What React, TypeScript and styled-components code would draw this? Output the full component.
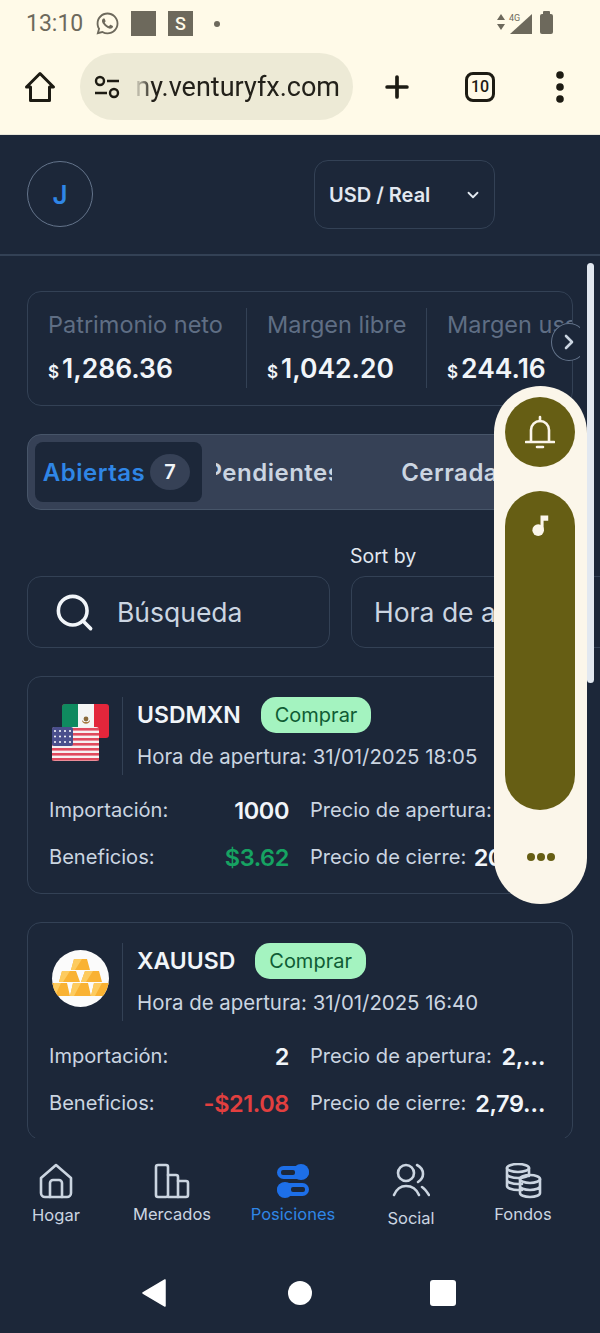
import styled, { createGlobalStyle } from 'styled-components';
import { FaWhatsapp } from 'react-icons/fa';
import { ChevronDown, ChevronRight, Search, Plus } from 'lucide-react';

const GlobalStyle = createGlobalStyle`
  * { box-sizing: border-box; }
  html, body { margin: 0; padding: 0; background: #1c2739; }
  body { font-family: Inter, "Liberation Sans", sans-serif; }
`;

const Screen = styled.div`
  position: relative;
  width: 600px;
  height: 1333px;
  overflow: hidden;
  display: flex;
  flex-direction: column;
  background: #1c2739;
`;

const Chrome = styled.div`
  height: 135px;
  flex: none;
  background: #fffae8;
  border-bottom: 1px solid #e8e6da;
`;

const StatusBar = styled.div`
  height: 47px;
  display: flex;
  align-items: center;
  padding: 0 47px 0 26px;
  font-family: Roboto, sans-serif;
  font-size: 23px;
  color: #6d695c;
`;

const Time = styled.span`
  width: 69px;
`;

const StatusTile = styled.span<{ $gap: number }>`
  width: 25px;
  height: 25px;
  margin-left: ${(p) => p.$gap}px;
  background: #6d695c;
  color: #fffae8;
  font-size: 18px;
  font-weight: 500;
  display: flex;
  align-items: center;
  justify-content: center;
`;

const StatusDot = styled.span`
  width: 6px;
  height: 6px;
  margin-left: 21px;
  border-radius: 50%;
  background: #6d695c;
`;

const StatusRight = styled.div`
  margin-left: auto;
  display: flex;
  align-items: center;
`;

const ToolBar = styled.div`
  height: 73px;
  margin-top: 3px;
  display: grid;
  grid-template-columns: 80px 273px 88px 78px 82px;
  align-items: center;
`;

const ToolButton = styled.div`
  display: flex;
  justify-content: center;
  align-items: center;
  color: #1d1b13;
`;

const Omnibox = styled.div`
  height: 67px;
  border-radius: 34px;
  background: #edead6;
  display: flex;
  align-items: center;
  padding: 0 13px 0 14px;
  gap: 14px;
`;

const UrlWindow = styled.div`
  flex: 1;
  display: flex;
  justify-content: flex-end;
  overflow: hidden;
  font-family: Roboto, sans-serif;
  font-size: 27px;
  color: #23211a;
  white-space: nowrap;
  -webkit-mask-image: linear-gradient(90deg, transparent 0, #000 18px);
  mask-image: linear-gradient(90deg, transparent 0, #000 18px);
`;

const TabCount = styled.div`
  width: 30px;
  height: 30px;
  border: 3px solid #1d1b13;
  border-radius: 8px;
  display: flex;
  align-items: center;
  justify-content: center;
  font-family: Roboto, sans-serif;
  font-size: 16px;
  font-weight: 500;
  color: #1d1b13;
`;

const TopBar = styled.header`
  height: 121px;
  flex: none;
  padding: 25px 0 0 27px;
  display: flex;
  align-items: flex-start;
  border-bottom: 2px solid #334155;
`;

const Avatar = styled.div`
  width: 66px;
  height: 66px;
  margin-top: 1px;
  border-radius: 50%;
  border: 1px solid #64748b;
  display: flex;
  align-items: center;
  justify-content: center;
  color: #2f86e6;
  font-size: 26px;
  font-weight: 600;
`;

const AccountSelect = styled.div`
  width: 181px;
  height: 69px;
  margin-left: 221px;
  padding: 0 12px 0 14px;
  display: flex;
  align-items: center;
  justify-content: space-between;
  border: 1px solid #334155;
  border-radius: 14px;
  color: #e2e8f0;
  font-size: 20px;
  font-weight: 600;
`;

const Content = styled.main`
  flex: none;
  height: 882px;
  overflow: hidden;
  padding: 35px 27px 0;
  display: flex;
  flex-direction: column;
`;

const SummaryCard = styled.section`
  height: 115px;
  flex: none;
  border: 1px solid #334155;
  border-radius: 14px;
  padding: 16px 0 0 20px;
  display: flex;
  overflow: hidden;
`;

const SummaryItem = styled.div<{ $width: number }>`
  flex: none;
  width: ${(p) => p.$width}px;
  height: 80px;
  & + & {
    padding-left: 20px;
    border-left: 1px solid #334155;
  }
`;

const SummaryLabel = styled.div`
  font-size: 23.5px;
  line-height: 34px;
  color: #5f6e84;
  white-space: nowrap;
`;

const SummaryValue = styled.div`
  margin-top: 8px;
  font-size: 26.5px;
  line-height: 36px;
  font-weight: 600;
  color: #f1f5f9;
  white-space: nowrap;
`;

const Dollar = styled.span`
  font-size: 17px;
  margin-right: 3px;
`;

const NextButton = styled.div`
  position: absolute;
  top: 323px;
  left: 551px;
  width: 29px;
  height: 38px;
  overflow: hidden;
  color: #cbd5e1;
`;

const NextCircle = styled.div`
  width: 36px;
  height: 38px;
  border: 1px solid #64748b;
  border-radius: 50%;
  background: #1c2739;
  display: flex;
  align-items: center;
  justify-content: center;
`;

const Tabs = styled.div`
  height: 76px;
  flex: none;
  margin-top: 28px;
  padding: 7px;
  display: flex;
  background: #364156;
  border: 1px solid #475569;
  border-radius: 14px;
  overflow: hidden;
`;

const Tab = styled.div<{ $active?: boolean; $width: number; $offset?: number }>`
  flex: none;
  width: ${(p) => p.$width}px;
  height: 60px;
  margin-left: ${(p) => p.$offset ?? 0}px;
  padding-right: ${(p) => (p.$active ? 4 : 0)}px;
  display: flex;
  align-items: center;
  justify-content: center;
  gap: 5px;
  overflow: hidden;
  white-space: nowrap;
  border-radius: 8px;
  font-size: 24px;
  font-weight: 600;
  letter-spacing: 0.5px;
  color: ${(p) => (p.$active ? '#2f86e6' : '#cbd5e1')};
  background: ${(p) => (p.$active ? '#1c2739' : 'transparent')};
`;

const TabText = styled.span`
  flex: none;
`;

const TabBadge = styled.span`
  width: 40px;
  height: 36px;
  flex: none;
  border-radius: 50%;
  background: #364156;
  display: flex;
  align-items: center;
  justify-content: center;
  font-size: 20px;
  color: #f1f5f9;
`;

const SortLabel = styled.div`
  margin: 34px 0 8px 323px;
  font-size: 19.5px;
  line-height: 24px;
  color: #e2e8f0;
`;

const FilterRow = styled.div`
  display: grid;
  grid-template-columns: 303px 303px;
  gap: 21px;
  flex: none;
`;

const FilterBox = styled.div`
  height: 72px;
  border: 1px solid #334155;
  border-radius: 14px;
  padding: 0 25px;
  display: flex;
  align-items: center;
  gap: 21px;
  font-size: 26.5px;
  color: #cbd5e1;
  white-space: nowrap;
  overflow: hidden;
`;

const SortBox = styled(FilterBox)`
  padding-left: 22px;
`;

const PositionCard = styled.article`
  height: 218px;
  flex: none;
  margin-top: 28px;
  padding: 20px 21px 0;
  border: 1px solid #334155;
  border-radius: 14px;
`;

const CardHead = styled.div`
  display: flex;
  height: 78px;
`;

const CardIcon = styled.div`
  width: 74px;
  flex: none;
  padding-bottom: 8px;
  border-right: 1px solid #334155;
  display: flex;
  align-items: center;
`;

const CardInfo = styled.div`
  padding-left: 14px;
`;

const SymbolLine = styled.div`
  display: flex;
  align-items: center;
  gap: 20px;
  height: 36px;
`;

const Symbol = styled.span`
  font-size: 23px;
  font-weight: 600;
  color: #f1f5f9;
`;

const SidePill = styled.span`
  height: 36px;
  padding: 0 14px;
  border-radius: 15px;
  display: flex;
  align-items: center;
  background: #a4f3c0;
  color: #0f5c34;
  font-size: 20px;
`;

const OpenTime = styled.div`
  margin-top: 10px;
  font-size: 20.4px;
  line-height: 28px;
  white-space: nowrap;
  color: #cbd5e1;
`;

const Stats = styled.div`
  margin-top: 21px;
  display: grid;
  grid-template-columns: 240px 235px;
  column-gap: 21px;
  row-gap: 19px;
`;

const Stat = styled.div`
  display: flex;
  align-items: center;
  justify-content: space-between;
  height: 28px;
  white-space: nowrap;
`;

const StatLabel = styled.span`
  font-size: 20.1px;
  color: #cbd5e1;
`;

const StatValue = styled.span<{ $tone?: 'up' | 'down' }>`
  font-size: 23.5px;
  font-weight: 600;
  letter-spacing: -0.4px;
  color: ${(p) => (p.$tone === 'up' ? '#16a362' : p.$tone === 'down' ? '#e23f3f' : '#f1f5f9')};
`;

const BottomNav = styled.nav`
  flex: none;
  height: 195px;
  display: flex;
  flex-direction: column;
`;

const NavItems = styled.div`
  height: 127px;
  padding-top: 25px;
  display: grid;
  grid-template-columns: 112px 120px 122px 114px 110px;
`;

const NavItem = styled.div<{ $active?: boolean }>`
  display: flex;
  flex-direction: column;
  align-items: center;
  font-size: 16.5px;
  color: ${(p) => (p.$active ? '#2f86e6' : '#cbd5e1')};
`;

const NavLabel = styled.span<{ $drop: number }>`
  margin-top: ${(p) => p.$drop}px;
  line-height: 20px;
`;

const SystemNav = styled.div`
  flex: 1;
  display: grid;
  grid-template-columns: 142px 24px 122px 24px 118px 26px;
  align-items: center;
  padding-bottom: 13px;
`;

const Circle = styled.div`
  width: 24px;
  height: 24px;
  border-radius: 50%;
  background: #fff;
`;

const Square = styled.div`
  width: 26px;
  height: 26px;
  border-radius: 3px;
  background: #fff;
`;

const ScrollThumb = styled.div`
  position: absolute;
  top: 263px;
  left: 587px;
  width: 7px;
  height: 420px;
  border-radius: 4px;
  background: #e2e8f0;
`;

const AssistPanel = styled.aside`
  position: absolute;
  top: 386px;
  left: 494px;
  width: 93px;
  height: 518px;
  padding: 11px;
  border-radius: 47px;
  background: #fbf6ea;
  display: flex;
  flex-direction: column;
  align-items: flex-start;
`;

const BellButton = styled.div`
  width: 70px;
  height: 70px;
  flex: none;
  border-radius: 50%;
  background: #665e14;
  display: flex;
  align-items: center;
  justify-content: center;
`;

const MusicPill = styled.div`
  width: 70px;
  height: 319px;
  flex: none;
  margin-top: 24px;
  padding-top: 22px;
  border-radius: 35px;
  background: #665e14;
  display: flex;
  justify-content: center;
`;

const MoreDots = styled.div`
  margin-top: 43px;
  align-self: center;
  display: flex;
  gap: 2px;
`;

const MoreDot = styled.span`
  width: 8px;
  height: 8px;
  border-radius: 50%;
  background: #665e14;
`;

function FlagPair() {
  const stripes = [0, 2, 4, 6, 8, 10, 12];
  return (
    <svg width="60" height="60" viewBox="-1 0 60 60">
      <rect x="12" y="2" width="47" height="34" rx="3" fill="#e3263b" />
      <path d="M15 2h13v34H15a3 3 0 0 1-3-3V5a3 3 0 0 1 3-3z" fill="#0f8a5f" />
      <rect x="28" y="2" width="16" height="34" fill="#f4f5f4" />
      <path d="M32 18c0 5 8 5 8 0l-2 2h-4z" fill="#a8793f" />
      <circle cx="36" cy="17" r="2.4" fill="#8a6a3a" />
      <rect x="2" y="25" width="47" height="34" rx="3" fill="#f6f1f1" />
      {stripes.map((s) => (
        <rect key={s} x="2" y={26 + s * 2.5} width="47" height="2.6" fill="#e04a5d" />
      ))}
      <rect x="2" y="25" width="21" height="19" rx="2" fill="#4a4f8c" />
      {[0, 1, 2].map((r) =>
        [0, 1, 2, 3].map((c) => <circle key={`${r}${c}`} cx={5 + c * 5} cy={29 + r * 5.5} r="1" fill="#fff" />)
      )}
    </svg>
  );
}

function GoldCoin() {
  return (
    <svg width="60" height="57" viewBox="-3 0 60 57">
      <clipPath id="coin">
        <circle cx="28.5" cy="28.5" r="28.5" />
      </clipPath>
      <circle cx="28.5" cy="28.5" r="28.5" fill="#fbfbfb" />
      <g clipPath="url(#coin)">
        <path
          d="M22 9h13l3 11H19zM10 21h14l4 11H7zM33 21h14l3 11H29zM-1 33h16l3 13H-3zM21 33h15l3 13H18zM42 33h16l2 13H39z"
          fill="#f9b233"
        />
        <path d="M22 9h8l-7 11h-4zM10 21h8l-7 11H7zM33 21h8l-7 11h-5zM21 33h8l-7 13h-4zM42 33h8l-7 13h-4zM2 33h7l-6 13H-1z" fill="#fdcb5f" />
      </g>
    </svg>
  );
}

const positions = [
  {
    symbol: 'USDMXN',
    time: '31/01/2025 18:05',
    volume: '1000',
    profit: '$3.62',
    tone: 'up' as const,
    open: '2…',
    close: '20.8…',
    icon: <FlagPair />,
  },
  {
    symbol: 'XAUUSD',
    time: '31/01/2025 16:40',
    volume: '2',
    profit: '-$21.08',
    tone: 'down' as const,
    open: '2,…',
    close: '2,79…',
    icon: <GoldCoin />,
  },
];

const navStroke = { fill: 'none', stroke: '#cbd5e1', strokeWidth: 2.6, strokeLinecap: 'round', strokeLinejoin: 'round' } as const;

function App() {
  return (
    <Screen>
      <GlobalStyle />
      <Chrome>
        <StatusBar>
          <Time>13:10</Time>
          <FaWhatsapp size={25} />
          <StatusTile $gap={11} />
          <StatusTile $gap={12}>S</StatusTile>
          <StatusDot />
          <StatusRight>
            <svg width="56" height="26" viewBox="0 0 56 26" fill="#6d695c">
              <path d="M4 3l4 6H0zM4 19l4-6H0z" />
              <path d="M35 3v20H13z" />
              <rect x="43" y="3" width="13" height="20" rx="2" />
              <rect x="46" y="0" width="7" height="4" rx="1" />
              <text x="12" y="10" fontSize="9" fontFamily="Roboto, sans-serif">4G</text>
            </svg>
          </StatusRight>
        </StatusBar>
        <ToolBar>
          <ToolButton>
            <svg width="32" height="32" viewBox="0 0 32 32" fill="none" stroke="#1d1b13" strokeWidth="3" strokeLinejoin="round">
              <path d="M2.500 16L16 2.500 29.500 16H25.500V29.500H6.500V16z" />
            </svg>
          </ToolButton>
          <Omnibox>
            <svg width="26" height="24" viewBox="0 0 26 24" fill="none" stroke="#1d1b13" strokeWidth="2.4" style={{ flex: 'none' }}>
              <circle cx="6" cy="6" r="4" />
              <path d="M13 6h12M1 18h12" />
              <circle cx="20" cy="18" r="4" />
            </svg>
            <UrlWindow>
              <span>company.venturyfx.com</span>
            </UrlWindow>
          </Omnibox>
          <ToolButton>
            <Plus size={34} strokeWidth={2.6} />
          </ToolButton>
          <ToolButton>
            <TabCount>10</TabCount>
          </ToolButton>
          <ToolButton>
            <svg width="10" height="32" viewBox="0 0 10 32" fill="#1d1b13">
              <circle cx="5" cy="4" r="3.8" />
              <circle cx="5" cy="16" r="3.8" />
              <circle cx="5" cy="28" r="3.8" />
            </svg>
          </ToolButton>
        </ToolBar>
      </Chrome>

      <TopBar>
        <Avatar>J</Avatar>
        <AccountSelect>
          USD / Real
          <ChevronDown size={18} strokeWidth={2.4} />
        </AccountSelect>
      </TopBar>

      <Content>
        <SummaryCard>
          <SummaryItem $width={198}>
            <SummaryLabel>Patrimonio neto</SummaryLabel>
            <SummaryValue>
              <Dollar>$</Dollar>1,286.36
            </SummaryValue>
          </SummaryItem>
          <SummaryItem $width={180}>
            <SummaryLabel>Margen libre</SummaryLabel>
            <SummaryValue>
              <Dollar>$</Dollar>1,042.20
            </SummaryValue>
          </SummaryItem>
          <SummaryItem $width={190}>
            <SummaryLabel>Margen usado</SummaryLabel>
            <SummaryValue>
              <Dollar>$</Dollar>244.16
            </SummaryValue>
          </SummaryItem>
        </SummaryCard>

        <Tabs>
          <Tab $active $width={167}>
            Abiertas <TabBadge>7</TabBadge>
          </Tab>
          <Tab $width={116} $offset={14}>
            <TabText>Pendientes</TabText>
          </Tab>
          <Tab $width={167} $offset={41}>
            Cerradas
          </Tab>
        </Tabs>

        <SortLabel>Sort by</SortLabel>
        <FilterRow>
          <FilterBox>
            <Search size={43} strokeWidth={2} color="#f1f5f9" style={{ flex: 'none' }} />
            Búsqueda
          </FilterBox>
          <SortBox>Hora de apertura</SortBox>
        </FilterRow>

        {positions.map((p) => (
          <PositionCard key={p.symbol}>
            <CardHead>
              <CardIcon>{p.icon}</CardIcon>
              <CardInfo>
                <SymbolLine>
                  <Symbol>{p.symbol}</Symbol>
                  <SidePill>Comprar</SidePill>
                </SymbolLine>
                <OpenTime>Hora de apertura: {p.time}</OpenTime>
              </CardInfo>
            </CardHead>
            <Stats>
              <Stat>
                <StatLabel>Importación:</StatLabel>
                <StatValue>{p.volume}</StatValue>
              </Stat>
              <Stat>
                <StatLabel>Precio de apertura:</StatLabel>
                <StatValue>{p.open}</StatValue>
              </Stat>
              <Stat>
                <StatLabel>Beneficios:</StatLabel>
                <StatValue $tone={p.tone}>{p.profit}</StatValue>
              </Stat>
              <Stat>
                <StatLabel>Precio de cierre:</StatLabel>
                <StatValue>{p.close}</StatValue>
              </Stat>
            </Stats>
          </PositionCard>
        ))}
      </Content>

      <BottomNav>
        <NavItems>
          <NavItem>
            <svg width="36" height="36" viewBox="0 0 36 36" {...navStroke}>
              <path d="M3 15L18 2l15 13v15a4 4 0 0 1-4 4H7a4 4 0 0 1-4-4z" />
              <path d="M12 34V20a3 3 0 0 1 3-3h6a3 3 0 0 1 3 3v14" />
            </svg>
            <NavLabel $drop={6}>Hogar</NavLabel>
          </NavItem>
          <NavItem>
            <svg width="36" height="36" viewBox="0 0 36 36" {...navStroke}>
              <rect x="2" y="2" width="12" height="32" rx="2" />
              <path d="M14 12h8a2 2 0 0 1 2 2v20H14" />
              <path d="M24 18h8a2 2 0 0 1 2 2v12a2 2 0 0 1-2 2h-8" />
            </svg>
            <NavLabel $drop={5}>Mercados</NavLabel>
          </NavItem>
          <NavItem $active>
            <svg width="36" height="36" viewBox="0 0 36 36">
              <rect x="2" y="3" width="32" height="13" rx="6.5" fill="#1d6fe8" />
              <circle cx="26" cy="9" r="8" fill="#1d6fe8" />
              <rect x="6" y="7" width="14" height="5" rx="2" fill="#1c2739" />
              <rect x="2" y="20" width="32" height="13" rx="6.5" fill="#1d6fe8" />
              <circle cx="10" cy="27" r="8" fill="#1d6fe8" />
              <rect x="16" y="24" width="14" height="5" rx="2" fill="#1c2739" />
            </svg>
            <NavLabel $drop={5}>Posiciones</NavLabel>
          </NavItem>
          <NavItem>
            <svg width="38" height="36" viewBox="0 0 38 36" {...navStroke}>
              <circle cx="14" cy="10" r="8" />
              <path d="M2 32c3-7 7-9 12-9s10 2 13 9" />
              <path d="M25 2c4 2 6 5 6 9s-2 6-5 8" />
              <path d="M30 24c3 2 5 5 7 8" />
            </svg>
            <NavLabel $drop={9}>Social</NavLabel>
          </NavItem>
          <NavItem>
            <svg width="38" height="36" viewBox="0 0 38 36" {...navStroke}>
              <ellipse cx="14" cy="5" rx="11" ry="4" />
              <path d="M3 5v18c0 2 5 4 11 4h4M3 11c0 2 5 4 11 4s11-2 11-4M3 17c0 2 5 4 11 4h4M25 5v8" />
              <ellipse cx="26" cy="16" rx="10" ry="4" />
              <path d="M16 16v14c0 2 4 4 10 4s10-2 10-4V16M16 23c0 2 4 4 10 4s10-2 10-4" />
            </svg>
            <NavLabel $drop={5}>Fondos</NavLabel>
          </NavItem>
        </NavItems>
        <SystemNav>
          <span />
          <svg width="24" height="28" viewBox="0 0 24 28">
            <path d="M23 1v26L1 14z" fill="#fff" stroke="#fff" strokeLinejoin="round" strokeWidth="1.5" />
          </svg>
          <span />
          <Circle />
          <span />
          <Square />
        </SystemNav>
      </BottomNav>

      <NextButton>
        <NextCircle>
          <ChevronRight size={24} strokeWidth={2.6} />
        </NextCircle>
      </NextButton>
      <ScrollThumb />
      <AssistPanel>
        <BellButton>
          <svg width="30" height="34" viewBox="0 0 30 34" fill="none" stroke="#fbf6ea" strokeWidth="2.6">
            <path d="M6 26V15a9 9 0 0 1 18 0v11" />
            <path d="M1 27h28" strokeLinecap="round" />
            <path d="M15 2v4M12 32h6" strokeLinecap="round" />
          </svg>
        </BellButton>
        <MusicPill>
          <svg width="17" height="25" viewBox="0 0 22 28" fill="#fbf6ea">
            <circle cx="8" cy="20" r="7.5" />
            <path d="M11 1h10v7h-6v12h-4z" />
          </svg>
        </MusicPill>
        <MoreDots>
          <MoreDot />
          <MoreDot />
          <MoreDot />
        </MoreDots>
      </AssistPanel>
    </Screen>
  );
}

export default App;
